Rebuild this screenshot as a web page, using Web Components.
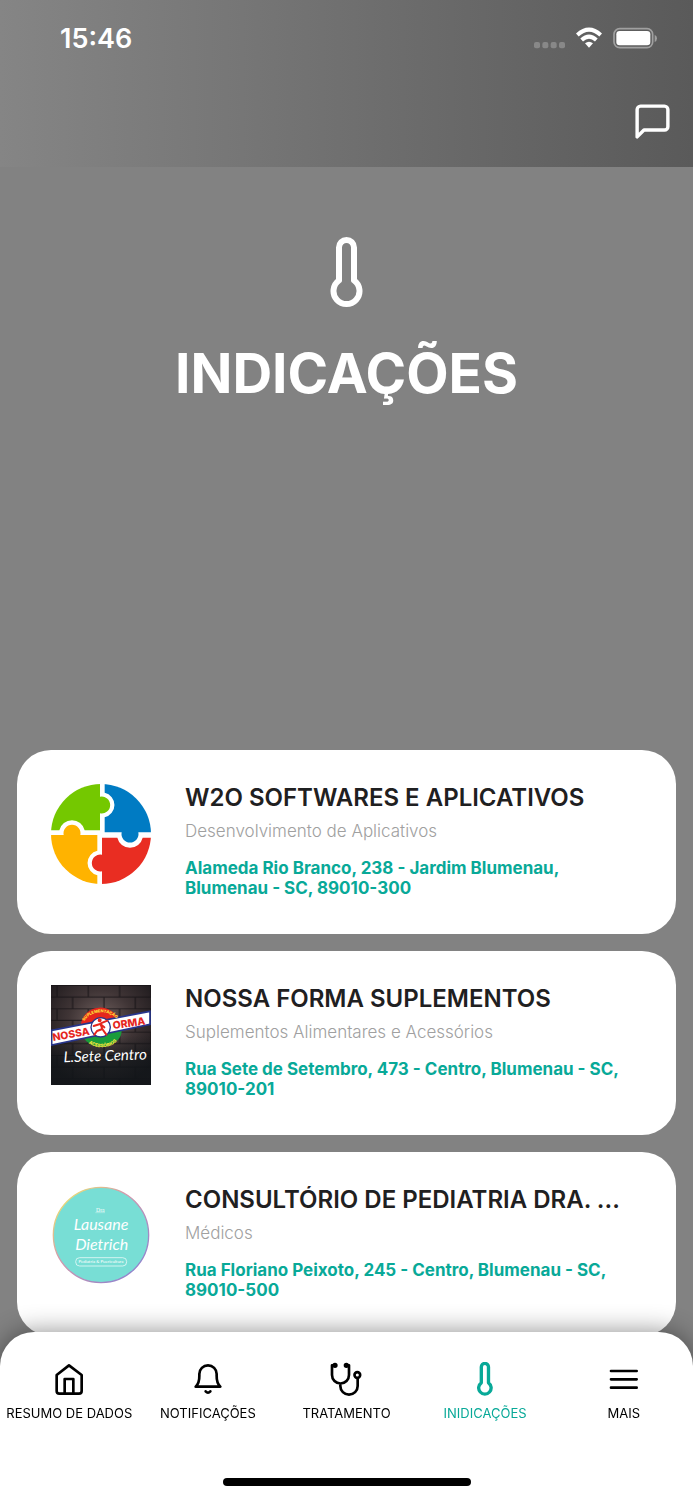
<!DOCTYPE html>
<html lang="pt-BR">
<head>
<meta charset="utf-8">
<meta name="viewport" content="width=device-width, initial-scale=1">
<title>Indicações</title>
<style>
body {
  margin: 0;
  background: #828282;
  font-family: Inter, "Liberation Sans", sans-serif;
  color: #1f2021;
  --accent: #08a998;
}
</style>
</head>
<body>
<app-screen>
  <app-header slot="header" time="15:46"></app-header>
  <page-hero>INDICAÇÕES</page-hero>
  <referral-list>
    <referral-card>
      <logo-w2o slot="logo"></logo-w2o>
      <span slot="name">W2O SOFTWARES E APLICATIVOS</span>
      <span slot="category">Desenvolvimento de Aplicativos</span>
      Alameda Rio Branco, 238 - Jardim Blumenau, Blumenau - SC, 89010-300
    </referral-card>
    <referral-card>
      <logo-nossa-forma slot="logo"></logo-nossa-forma>
      <span slot="name">NOSSA FORMA SUPLEMENTOS</span>
      <span slot="category">Suplementos Alimentares e Acessórios</span>
      Rua Sete de Setembro, 473 - Centro, Blumenau - SC, 89010-201
    </referral-card>
    <referral-card>
      <logo-lausane slot="logo"></logo-lausane>
      <span slot="name">CONSULTÓRIO DE PEDIATRIA DRA. ...</span>
      <span slot="category">Médicos</span>
      Rua Floriano Peixoto, 245 - Centro, Blumenau - SC, 89010-500
    </referral-card>
  </referral-list>
  <tab-bar slot="footer">
    <tab-item icon="home">RESUMO DE DADOS</tab-item>
    <tab-item icon="bell">NOTIFICAÇÕES</tab-item>
    <tab-item icon="stethoscope">TRATAMENTO</tab-item>
    <tab-item icon="thermometer" active>INIDICAÇÕES</tab-item>
    <tab-item icon="menu">MAIS</tab-item>
  </tab-bar>
</app-screen>

<script>
const thermometer = (stroke) => `
<svg viewBox="0 0 33 71" fill="none" stroke="currentColor" stroke-width="${stroke}" stroke-linejoin="round" aria-hidden="true">
  <path d="M9 10.5a7.5 7.5 0 0 1 15 0V43.4A13 13 0 1 1 9 43.4Z"/>
</svg>`

const lineIcon = (content) => `
<svg viewBox="0 0 102 102" fill="none" stroke="currentColor" stroke-width="8" stroke-linecap="round" stroke-linejoin="round" aria-hidden="true">${content}</svg>`

const icons = {
  home: lineIcon('<path d="M14 39L51 10l38 29v48q0 8-8 8H22q-8 0-8-8ZM38 95V51h26v44"/>'),
  bell: lineIcon('<path d="M14 74C27 62 25 49 25 36a26 26 0 0 1 52 0C77 49 75 62 88 74Z"/><path d="M44 88q7 8 14 0"/>'),
  stethoscope: lineIcon(`
    <path d="M17 10H9v29a25.500 25.500 0 0 0 51 0V10h-8M34 65v7a26 26 0 0 0 52 0V50"/>
    <circle cx="85" cy="39" r="8.500"/>
    <circle cx="18" cy="10" r="4"/><circle cx="52" cy="10" r="4"/>`),
  thermometer: thermometer(7),
  menu: lineIcon('<path d="M12 27h77M12 52h77M12 77h77"/>')
}

// Attaches an open shadow root filled from a markup string
const render = (element, html) => {
  const template = document.createElement('template')
  template.innerHTML = html
  const root = element.attachShadow({ mode: 'open' })
  root.append(template.content.cloneNode(true))
  return root
}

class AppScreen extends HTMLElement {
  constructor() {
    super()
    render(this, `
<style>
:host {
  display: flex;
  flex-direction: column;
  box-sizing: border-box;
  min-height: 100vh;
  padding-bottom: 160px;
}
footer {
  position: fixed;
  bottom: 0;
  left: 0;
  right: 0;
}
</style>
<slot name="header"></slot>
<main><slot></slot></main>
<footer><slot name="footer"></slot></footer>`)
  }
}

class AppHeader extends HTMLElement {
  constructor() {
    super()
    const root = render(this, `
<style>
:host {
  display: block;
  background: linear-gradient(to right, #858585, #5a5a5a);
  color: #fff;
}
.status {
  display: flex;
  align-items: center;
  justify-content: space-between;
  height: 76px;
  padding: 0 36px 0 60px;
}
.time {
  font-size: 27px;
  font-weight: 600;
}
.signals {
  display: flex;
  align-items: center;
  gap: 11px;
}
.signals svg {
  height: 22px;
}
.toolbar {
  display: flex;
  align-items: center;
  justify-content: flex-end;
  height: 91px;
  padding: 0 20px;
}
button {
  display: grid;
  padding: 0;
  border: none;
  background: none;
  color: inherit;
  cursor: pointer;
}
</style>
<div class="status">
  <span class="time"></span>
  <div class="signals">
    <svg width="31" viewBox="0 0 93 66" fill="#888" aria-hidden="true">
      <rect x="0" y="45" width="18" height="19" rx="6"/>
      <rect x="25" y="45" width="18" height="19" rx="6"/>
      <rect x="50" y="45" width="18" height="19" rx="6"/>
      <rect x="75" y="45" width="18" height="19" rx="6"/>
    </svg>
    <svg width="26" viewBox="0 0 78 66" fill="none" stroke="#fff" stroke-width="12" aria-hidden="true">
      <path d="M4 24Q39-8 74 24M17 39Q39 19 61 39"/>
      <path d="M27 49Q39 40 51 49L39 62Z" fill="#fff" stroke="none"/>
    </svg>
    <svg width="44" viewBox="0 0 132 66" aria-hidden="true">
      <rect x="3" y="5" width="116" height="57" rx="17" fill="none" stroke="#a0a0a0" stroke-width="5"/>
      <rect x="10" y="12" width="102" height="43" rx="10" fill="#fff"/>
      <path d="M125 23q7 3 7 11t-7 11Z" fill="#a0a0a0"/>
    </svg>
  </div>
</div>
<div class="toolbar">
  <button type="button" aria-label="Mensagens">
    <svg width="41" height="41" viewBox="0 0 24 24" fill="none" stroke="currentColor" stroke-width="2" stroke-linecap="round" stroke-linejoin="round">
      <path d="M21 15a2 2 0 0 1-2 2H7l-4 4V5a2 2 0 0 1 2-2h14a2 2 0 0 1 2 2z"/>
    </svg>
  </button>
</div>`)
    root.querySelector('.time').textContent = this.getAttribute('time')
  }
}

class PageHero extends HTMLElement {
  constructor() {
    super()
    render(this, `
<style>
:host {
  display: flex;
  flex-direction: column;
  align-items: center;
  gap: 33px;
  box-sizing: border-box;
  min-height: 583px;
  padding-top: 70px;
  color: #fff;
}
svg {
  height: 71px;
}
h1 {
  margin: 0;
  font-size: 55px;
  line-height: 64px;
  font-weight: 700;
}
</style>
${thermometer(6)}
<h1><slot></slot></h1>`)
  }
}

class ReferralList extends HTMLElement {
  constructor() {
    super()
    render(this, `
<style>
:host {
  display: grid;
  gap: 17px;
  padding: 0 17px;
}
</style>
<slot></slot>`)
  }
}

class ReferralCard extends HTMLElement {
  constructor() {
    super()
    render(this, `
<style>
:host {
  display: block;
}
article {
  display: grid;
  grid-template-columns: 100px 1fr;
  gap: 34px;
  padding: 34px 34px 36px;
  border-radius: 34px;
  background: #fff;
}
.details {
  min-width: 0;
}
h2 {
  margin: 0 0 8px;
  font-size: 24px;
  line-height: 28px;
  font-weight: 600;
  white-space: nowrap;
  overflow: hidden;
  text-overflow: ellipsis;
}
.category {
  margin: 0 0 16px;
  font-size: 17px;
  line-height: 22px;
  font-weight: 300;
  color: #a0a0a0;
}
.address {
  margin: 0;
  font-size: 17px;
  line-height: 20px;
  font-weight: 700;
  color: var(--accent);
}
</style>
<article>
  <slot name="logo"></slot>
  <div class="details">
    <h2><slot name="name"></slot></h2>
    <p class="category"><slot name="category"></slot></p>
    <p class="address"><slot></slot></p>
  </div>
</article>`)
  }
}

const logoStyle = `
<style>
:host {
  display: block;
  width: 100px;
  height: 100px;
}
svg {
  display: block;
}
</style>`

class LogoW2o extends HTMLElement {
  constructor() {
    super()
    render(this, `${logoStyle}
<svg width="100" height="100" viewBox="0 0 300 300" role="img" aria-label="W2O">
  <clipPath id="disc"><circle cx="150" cy="150" r="150"/></clipPath>
  <g clip-path="url(#disc)">
    <path fill="#74c800" d="M0 0H147V38A25.500 25.500 0 1 1 147 88V139H101A39 39 0 0 0 25 139H0Z"/>
    <path fill="#007bc3" d="M161 0H300V145H262A25.500 25.500 0 1 1 212 145H161V100A38 38 0 0 0 161 26Z"/>
    <path fill="#e92d22" d="M300 161H275A39 39 0 0 1 199 161H153V212A25.500 25.500 0 1 0 153 262V300H300Z"/>
    <path fill="#ffb300" d="M0 153H38A25.500 25.500 0 1 1 88 153H139V200A38 38 0 0 0 139 274V300H0Z"/>
  </g>
</svg>`)
  }
}

class LogoNossaForma extends HTMLElement {
  constructor() {
    super()
    render(this, `${logoStyle}
<svg width="100" height="100" viewBox="0 0 300 300" role="img" aria-label="Nossa Forma">
  <defs>
    <radialGradient id="glow" cx="50%" cy="38%" r="65%">
      <stop offset="0" stop-color="#756563"/>
      <stop offset=".5" stop-color="#403536"/>
      <stop offset="1" stop-color="#1d191c"/>
    </radialGradient>
    <pattern id="bricks" width="94" height="70" patternUnits="userSpaceOnUse">
      <path d="M0 1H94M0 36H94M18 1V36M65 36V70" stroke="#141114" stroke-width="4" fill="none" opacity=".7"/>
    </pattern>
    <path id="top-arc" d="M98 112A56 46 0 0 1 198 104"/>
    <path id="bottom-arc" d="M98 154A56 44 0 0 0 208 146"/>
    <linearGradient id="shade" x2="0" y2="1">
      <stop offset=".5" stop-color="#10161a" stop-opacity="0"/>
      <stop offset=".75" stop-color="#10161a" stop-opacity=".65"/>
    </linearGradient>
  </defs>
  <rect width="300" height="300" fill="url(#glow)"/>
  <rect width="300" height="300" fill="url(#bricks)"/>
  <rect width="300" height="300" fill="url(#shade)"/>
  <path d="M90 126A58 54 0 0 1 206 118Z" fill="#e5261d"/>
  <path d="M92 140A58 48 0 0 0 212 132Z" fill="#199c3b"/>
  <path d="M2 136L297 79V118L2 180Z" fill="#fff" stroke="#27358c" stroke-width="5"/>
  <circle cx="149" cy="127" r="29" fill="#fff" stroke="#27358c" stroke-width="4"/>
  <g font-family="Inter, sans-serif" font-weight="800">
    <text x="7" y="168" font-size="31" fill="#e5261d" transform="rotate(-10 7 168)">NOSSA</text>
    <text x="187" y="132" font-size="31" fill="#e5261d" transform="rotate(-8 187 132)">ORMA</text>
    <g font-size="12" fill="#ffe53b" text-anchor="middle">
      <text><textPath href="#top-arc" startOffset="50%">SUPLEMENTAÇÃO</textPath></text>
      <text font-size="14"><textPath href="#bottom-arc" startOffset="50%">ACESSÓRIOS</textPath></text>
    </g>
  </g>
  <g fill="none" stroke="#e5261d" stroke-width="6" stroke-linecap="round" stroke-linejoin="round">
    <path d="M148 116L154 132L166 149M154 132L138 138L130 149M145 118L128 123M149 115L169 107M149 118L160 127"/>
    <circle cx="146" cy="106" r="3"/>
  </g>
  <text x="38" y="232" font-family="Lato, sans-serif" font-style="italic" font-size="45" fill="#fff" transform="rotate(-2 38 232)">L.Sete Centro</text>
</svg>`)
  }
}

class LogoLausane extends HTMLElement {
  constructor() {
    super()
    render(this, `${logoStyle}
<svg width="100" height="100" viewBox="2 6 300 300" role="img" aria-label="Dra Lausane Dietrich">
  <linearGradient id="rim" x2="1" y2="1">
    <stop offset=".1" stop-color="#e9df73"/>
    <stop offset=".4" stop-color="#d49aab"/>
    <stop offset=".9" stop-color="#8d82cf"/>
  </linearGradient>
  <circle cx="152" cy="153" r="143" fill="#78ded5" stroke="url(#rim)" stroke-width="4"/>
  <g fill="#fff" text-anchor="middle">
    <text x="150" y="83" font-family="Liberation Serif, serif" font-size="17">Dra</text>
    <g font-family="Lato, sans-serif" font-style="italic" font-size="48">
      <text x="152" y="139">Lausane</text>
      <text x="154" y="198">Dietrich</text>
    </g>
    <text x="152" y="238" font-family="Lato, sans-serif" font-size="13">Pediatria &amp; Puericultura</text>
  </g>
  <path d="M135 86h29" stroke="#fff" stroke-width="1"/>
  <rect x="76" y="221" width="153" height="25" rx="12" fill="none" stroke="#fff" stroke-width="2"/>
</svg>`)
  }
}

class TabBar extends HTMLElement {
  constructor() {
    super()
    render(this, `
<style>
:host {
  display: block;
  box-sizing: border-box;
  height: 168px;
  padding-top: 30px;
  border-radius: 34px 34px 0 0;
  background: #fff;
  box-shadow: 0 0 26px rgba(0, 0, 0, .45);
}
nav {
  display: grid;
  grid-template-columns: repeat(5, 1fr);
  height: 116px;
}
.indicator {
  width: 248px;
  height: 8px;
  margin: 0 auto;
  border-radius: 4px;
  background: #000;
}
</style>
<nav><slot></slot></nav>
<div class="indicator"></div>`)
  }
}

class TabItem extends HTMLElement {
  constructor() {
    super()
    render(this, `
<style>
:host {
  display: block;
  min-width: 0;
  color: #000;
}
:host([active]) {
  color: var(--accent);
}
a {
  display: flex;
  flex-direction: column;
  align-items: center;
  gap: 9px;
  color: inherit;
  font-size: 13px;
  line-height: 16px;
  text-decoration: none;
  white-space: nowrap;
}
svg {
  height: 34px;
}
</style>
<a href="#${this.getAttribute('icon')}">
  ${icons[this.getAttribute('icon')]}
  <span><slot></slot></span>
</a>`)
  }
}

customElements.define('app-screen', AppScreen)
customElements.define('app-header', AppHeader)
customElements.define('page-hero', PageHero)
customElements.define('referral-list', ReferralList)
customElements.define('referral-card', ReferralCard)
customElements.define('logo-w2o', LogoW2o)
customElements.define('logo-nossa-forma', LogoNossaForma)
customElements.define('logo-lausane', LogoLausane)
customElements.define('tab-bar', TabBar)
customElements.define('tab-item', TabItem)
</script>
</body>
</html>
